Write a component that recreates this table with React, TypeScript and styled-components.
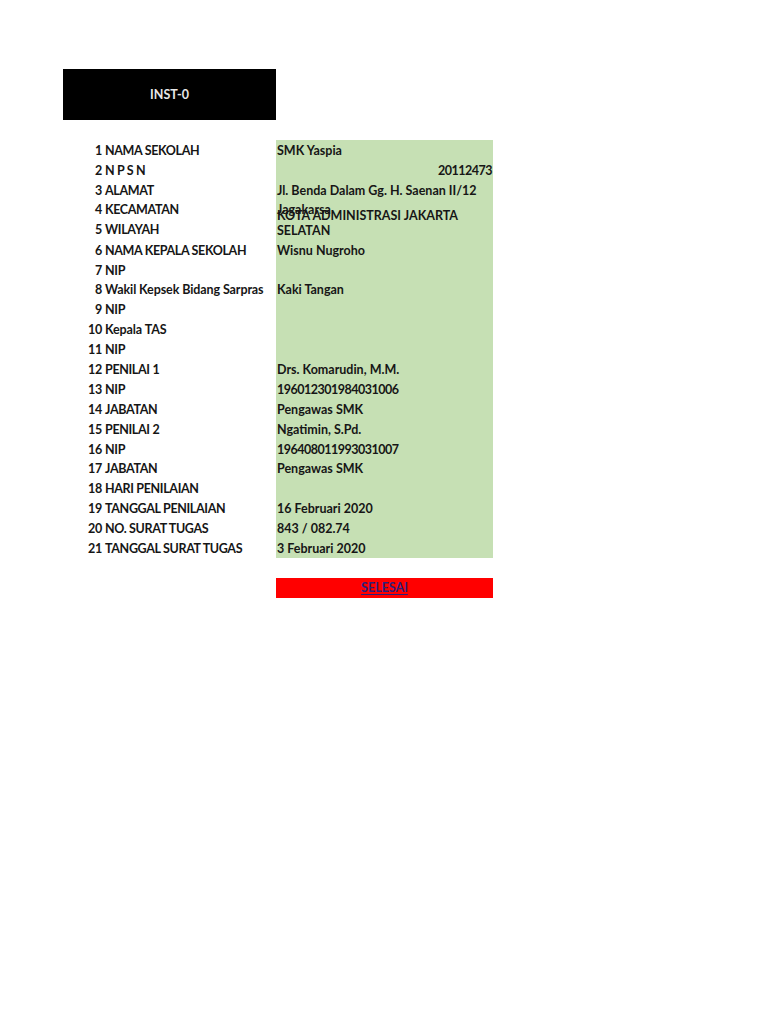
import React from "react";
import styled, { createGlobalStyle } from "styled-components";

const Global = createGlobalStyle`
  html, body { margin: 0; padding: 0; background: #ffffff; }
  body { font-family: Lato, "Open Sans", sans-serif; color: #161616; }
`;

const Page = styled.div`
  width: 768px;
  height: 1024px;
  padding: 69px 0 0 63px;
  box-sizing: border-box;
  display: flex;
  flex-direction: column;
`;

const Header = styled.div`
  width: 213px;
  height: 51px;
  background: #000;
  color: #e8e8e8;
  font-weight: 700;
  font-size: 12.5px;
  display: flex;
  align-items: center;
  justify-content: center;
  padding-bottom: 1px;
  box-sizing: border-box;
`;

const Table = styled.div`
  margin-top: 20px;
  display: grid;
  grid-template-columns: 40px 173px 217px;
  width: 430px;
`;

const Num = styled.div<{ $h: number }>`
  height: ${(p) => p.$h}px;
  box-sizing: border-box;
  padding: 1px 1px 0 0;
  display: flex;
  align-items: center;
  justify-content: flex-end;
  font-size: 12.5px;
  font-weight: 700;
  letter-spacing: -0.2px;
  white-space: nowrap;
`;

const Label = styled.div<{ $h: number; $caps?: boolean }>`
  height: ${(p) => p.$h}px;
  box-sizing: border-box;
  padding: 1px 0 0 2px;
  display: flex;
  align-items: center;
  font-size: 12.5px;
  font-weight: 700;
  letter-spacing: ${(p) => (p.$caps ? "-0.35px" : "-0.1px")};
  white-space: nowrap;
`;

const Value = styled.div<{ $h: number; $right?: boolean; $wrap?: boolean; $digits?: boolean }>`
  height: ${(p) => p.$h}px;
  background: #c6e0b4;
  display: flex;
  align-items: ${(p) => (p.$wrap ? "flex-end" : "center")};
  justify-content: ${(p) => (p.$right ? "flex-end" : "flex-start")};
  padding: ${(p) => (p.$wrap ? "0 1px 2px 1px" : "1px 1px 0 1px")};
  box-sizing: border-box;
  font-size: 12.5px;
  font-weight: 700;
  letter-spacing: ${(p) => (p.$digits ? "-0.5px" : "0")};
  white-space: ${(p) => (p.$wrap ? "normal" : "nowrap")};
  line-height: ${(p) => (p.$wrap ? "15px" : "normal")};
  position: relative;
  z-index: ${(p) => (p.$wrap ? 1 : 0)};
`;

const Spacer = styled.div`
  height: 20px;
`;

const Finish = styled.div`
  margin-left: 213px;
  width: 217px;
  height: 20px;
  background: #ff0000;
  display: flex;
  align-items: center;
  justify-content: center;
`;

const FinishLink = styled.a`
  color: #2e1f7a;
  font-size: 12.5px;
  font-weight: 700;
  text-decoration-line: underline;
  text-decoration-color: #2e1f7a;
  text-decoration-thickness: 1px;
  text-underline-offset: 2px;
`;

type Row = { n: string; label: string; value: string; h?: number; right?: boolean; wrap?: boolean };

const rows: Row[] = [
  { n: "1", label: "NAMA SEKOLAH", value: "SMK Yaspia" },
  { n: "2", label: "N P S N", value: "20112473", right: true },
  { n: "3", label: "ALAMAT", value: "Jl. Benda Dalam Gg. H. Saenan II/12" },
  { n: "4", label: "KECAMATAN", value: "Jagakarsa", h: 18 },
  { n: "5", label: "WILAYAH", value: "KOTA ADMINISTRASI JAKARTA SELATAN", h: 22, wrap: true },
  { n: "6", label: "NAMA KEPALA SEKOLAH", value: "Wisnu Nugroho" },
  { n: "7", label: "NIP", value: "" },
  { n: "8", label: "Wakil Kepsek Bidang Sarpras", value: "Kaki Tangan" },
  { n: "9", label: "NIP", value: "" },
  { n: "10", label: "Kepala TAS", value: "" },
  { n: "11", label: "NIP", value: "" },
  { n: "12", label: "PENILAI 1", value: "Drs. Komarudin, M.M." },
  { n: "13", label: "NIP", value: "196012301984031006" },
  { n: "14", label: "JABATAN", value: "Pengawas SMK" },
  { n: "15", label: "PENILAI 2", value: "Ngatimin, S.Pd." },
  { n: "16", label: "NIP", value: "196408011993031007" },
  { n: "17", label: "JABATAN", value: "Pengawas SMK" },
  { n: "18", label: "HARI PENILAIAN", value: "" },
  { n: "19", label: "TANGGAL PENILAIAN", value: "16 Februari 2020" },
  { n: "20", label: "NO. SURAT TUGAS", value: "843 / 082.74" },
  { n: "21", label: "TANGGAL SURAT TUGAS", value: "3 Februari 2020" },
];

export default function App() {
  return (
    <>
      <Global />
      <Page>
        <Header>INST-0</Header>
        <Table>
          {rows.map((r) => {
            const h = r.h ?? 19.9;
            const caps = r.label === r.label.toUpperCase();
            const digits = /^\d+$/.test(r.value);
            return (
              <React.Fragment key={r.n}>
                <Num $h={h}>{r.n}</Num>
                <Label $h={h} $caps={caps}>{r.label}</Label>
                <Value $h={h} $right={r.right} $wrap={r.wrap} $digits={digits}>
                  {r.wrap ? <span>{r.value}</span> : r.value}
                </Value>
              </React.Fragment>
            );
          })}
        </Table>
        <Spacer />
        <Finish>
          <FinishLink href="#">SELESAI</FinishLink>
        </Finish>
      </Page>
    </>
  );
}
